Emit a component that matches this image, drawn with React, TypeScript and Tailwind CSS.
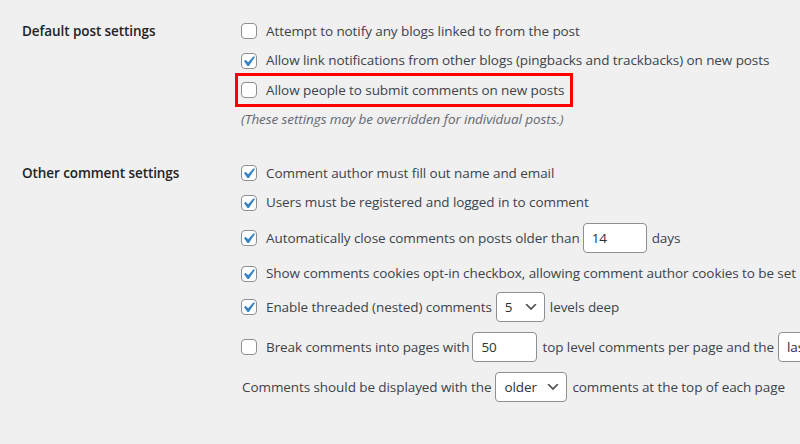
import React from 'react';

function Check({ checked = false }: { checked?: boolean }) {
  return (
    <span className="relative inline-block w-4 h-4 shrink-0 rounded-[4px] border border-[#8c8f94] bg-white">
      {checked && (
        <svg viewBox="0 0 20 20" className="absolute -left-[4px] -top-[3px] w-[21px] h-[21px]">
          <path d="M14.83 4.89l1.34.94-5.81 8.38H9.02L5.78 9.67l1.34-1.25 2.57 2.4z" fill="#3582c4" />
        </svg>
      )}
    </span>
  );
}

function TextBox({ value, w }: { value: string; w: string }) {
  return (
    <span className={`inline-flex shrink-0 items-center h-[30px] px-2 ml-[3px] mr-[5px] rounded-[4px] border border-[#8c8f94] bg-white text-[#2c3338] ${w}`}>
      {value}
    </span>
  );
}

function SelectBox({ value, w }: { value: string; w: string }) {
  return (
    <span className={`inline-flex shrink-0 items-center justify-between h-[30px] pl-2 pr-[5px] ml-[4px] mr-[5px] rounded-[4px] border border-[#8c8f94] bg-white text-[#2c3338] ${w}`}>
      <span>{value}</span>
      <svg viewBox="0 0 20 20" className="w-4 h-4">
        <path d="M5 6l5 5 5-5 2 1-7 7-7-7 2-1z" fill="#555" />
      </svg>
    </span>
  );
}

export default function App() {
  return (
    <div className="w-[800px] h-[444px] overflow-hidden bg-[#f0f0f1] text-[13.5px] tracking-[-0.08px] text-[#3c434a] font-['Open_Sans',sans-serif] whitespace-nowrap">
      <div className="pl-[22px] pt-4">
        {/* Default post settings */}
        <div className="flex">
          <div className="w-[219px] shrink-0 h-[30px] flex items-center font-semibold text-[#1d2327]">Default post settings</div>
          <div className="flex flex-col">
            <div className="h-[30px] flex items-center">
              <Check />
              <span className="ml-[9px]">Attempt to notify any blogs linked to from the post</span>
            </div>
            <div className="h-[29px] flex items-center">
              <Check checked />
              <span className="ml-[9px]">Allow link notifications from other blogs (pingbacks and trackbacks) on new posts</span>
            </div>
            <div className="h-[30px] w-[334px] -ml-[4px] pl-[4px] flex items-center outline-[3px] outline-solid outline-[#ff0000] -outline-offset-1">
              <Check />
              <span className="ml-[9px]">Allow people to submit comments on new posts</span>
            </div>
            <div className="h-[29px] flex items-center italic text-[#646970]">
              (These settings may be overridden for individual posts.)
            </div>
          </div>
        </div>

        {/* Other comment settings */}
        <div className="flex mt-6">
          <div className="w-[219px] shrink-0 h-[30px] flex items-center font-semibold text-[#1d2327]">Other comment settings</div>
          <div className="flex flex-col">
            <div className="h-[30px] flex items-center">
              <Check checked />
              <span className="ml-[9px]">Comment author must fill out name and email</span>
            </div>
            <div className="h-[29px] flex items-center">
              <Check checked />
              <span className="ml-[9px]">Users must be registered and logged in to comment</span>
            </div>
            <div className="h-[42px] flex items-center">
              <Check checked />
              <span className="ml-[9px]">Automatically close comments on posts older than</span>
              <TextBox value="14" w="w-[64px]" />
              <span>days</span>
            </div>
            <div className="h-[29px] flex items-center">
              <Check checked />
              <span className="ml-[9px]">Show comments cookies opt-in checkbox, allowing comment author cookies to be set</span>
            </div>
            <div className="h-[38px] flex items-center">
              <Check checked />
              <span className="ml-[9px]">Enable threaded (nested) comments</span>
              <SelectBox value="5" w="w-[49px]" />
              <span>levels deep</span>
            </div>
            <div className="h-[42px] flex items-center">
              <Check />
              <span className="ml-[9px]">Break comments into pages with</span>
              <TextBox value="50" w="w-[65px]" />
              <span>top level comments per page and the</span>
              <SelectBox value="last" w="w-[70px]" />
              <span>page displayed by default</span>
            </div>
            <div className="h-[38px] flex items-center pl-px">
              <span>Comments should be displayed with the</span>
              <SelectBox value="older" w="w-[72px]" />
              <span>comments at the top of each page</span>
            </div>
          </div>
        </div>
      </div>
    </div>
  );
}
